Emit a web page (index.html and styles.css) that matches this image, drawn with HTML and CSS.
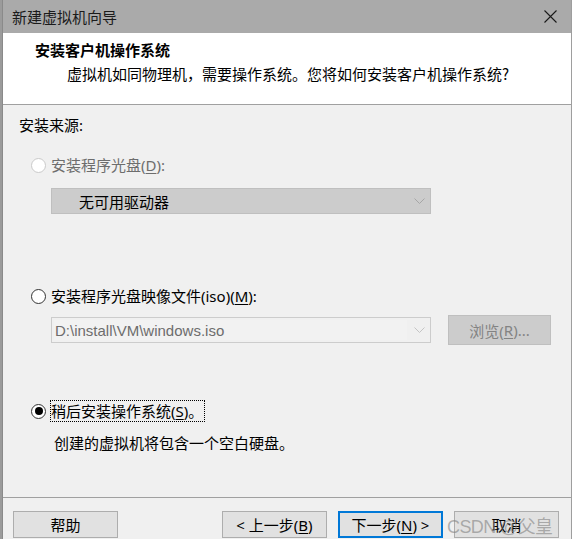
FILE: index.html
```html
<!DOCTYPE html>
<html lang="zh-CN">
<head>
<meta charset="utf-8">
<title>新建虚拟机向导</title>
<link rel="stylesheet" href="styles.css">
</head>
<body>
<div class="window">
  <div class="titlebar">
    <span class="title">新建虚拟机向导</span>
    <svg class="close" width="13" height="13" viewBox="0 0 13 13"><path d="M0.5 0.5 L12.5 12.5 M12.5 0.5 L0.5 12.5" stroke="#1a1a1a" stroke-width="1.1" fill="none"/></svg>
  </div>
  <div class="header">
    <div class="h-title">安装客户机操作系统</div>
    <div class="h-sub">虚拟机如同物理机，需要操作系统。您将如何安装客户机操作系统?</div>
  </div>
  <div class="content">
    <div class="section-label">安装来源:</div>

    <div class="radio-row disabled r1">
      <span class="radio"></span>
      <span class="rlabel">安装程序光盘(<u>D</u>):</span>
    </div>
    <div class="select disabled-select">
      <span class="select-text">无可用驱动器</span>
      <svg class="chev" width="11" height="6" viewBox="0 0 11 6"><path d="M0.5 0.5 L5.5 5.5 L10.5 0.5" stroke="#a6a6a6" fill="none"/></svg>
    </div>

    <div class="radio-row r2">
      <span class="radio"></span>
      <span class="rlabel">安装程序光盘映像文件(iso)(<u>M</u>):</span>
    </div>
    <div class="iso-row">
      <div class="combo">
        <span class="combo-field">D:\install\VM\windows.iso</span>
        <svg class="chev" width="11" height="6" viewBox="0 0 11 6"><path d="M0.5 0.5 L5.5 5.5 L10.5 0.5" stroke="#c4c4c4" fill="none"/></svg>
      </div>
      <div class="btn disabled-btn">浏览(<u>R</u>)...</div>
    </div>

    <div class="radio-row r3">
      <span class="radio checked"></span>
      <span class="rlabel focus">稍后安装操作系统(<u>S</u>)。</span>
    </div>
    <div class="desc">创建的虚拟机将包含一个空白硬盘。</div>
  </div>
  <div class="footer">
    <div class="btn">帮助</div>
    <div class="spacer"></div>
    <div class="btn">&lt; 上一步(<u>B</u>)</div>
    <div class="btn primary">下一步(<u>N</u>) &gt;</div>
    <div class="btn">取消</div>
  </div>
  <div class="watermark">CSDN @父皇</div>
</div>
</body>
</html>
```
FILE: styles.css
```css
* { box-sizing: border-box; }
html, body { margin: 0; padding: 0; }
body {
  width: 572px;
  height: 539px;
  overflow: hidden;
  background: #9b9b9b;
  font-family: "Noto Sans", "Noto Sans CJK SC", sans-serif;
  font-size: 15px;
  color: #000;
}
.window {
  position: relative;
  margin-left: 2px;
  width: 570px;
  height: 539px;
  background: #f0f0f0;
  border-left: 1px solid #8a8a8a;
  border-right: 1px solid #9e9e9e;
  display: flex;
  flex-direction: column;
}
.titlebar {
  height: 33px;
  flex: none;
  background: #aaaaaa;
  display: flex;
  align-items: center;
  justify-content: space-between;
  padding: 0 14px 0 9px;
}
.title {
  font-family: "Noto Sans CJK SC", sans-serif;
  font-size: 15px;
  color: #1b1b1b;
}
.close { display: block; }
.header {
  height: 72px;
  flex: none;
  background: #fff;
  border-bottom: 1px solid #a0a0a0;
  padding: 6px 0 0 32px;
}
.h-title {
  font-family: "Noto Sans CJK SC", sans-serif;
  font-weight: bold;
  font-size: 15px;
  line-height: 22px;
}
.h-sub {
  font-family: "Noto Sans CJK SC", sans-serif;
  line-height: 22px;
  margin-top: 2px;
  padding-left: 32px;
}
.content {
  flex: 1;
  padding: 10px 0 0 16px;
  display: flex;
  flex-direction: column;
}
.section-label { line-height: 20px; }
.radio-row {
  display: flex;
  align-items: center;
  height: 20px;
  padding-left: 12px;
}
.r1 { margin-top: 20px; }
.r2 { margin-top: 72px; }
.r3 { margin-top: 56px; }
.radio {
  width: 15px;
  height: 15px;
  border-radius: 50%;
  border: 1px solid #333;
  background: #fff;
  position: relative;
  margin-right: 5px;
  flex: none;
}
.disabled .radio { border-color: #cacaca; }
.disabled .rlabel { color: #6d6d6d; }
.radio.checked::after {
  content: "";
  position: absolute;
  left: 2.5px;
  top: 2.5px;
  width: 8px;
  height: 8px;
  border-radius: 50%;
  background: #000;
}
.rlabel { line-height: 20px; }
.focus {
  outline: 1px dotted #000;
  outline-offset: 0;
  padding: 0 1px 0 0;
}
.select {
  margin: 13px 0 0 32px;
  width: 380px;
  height: 26px;
  display: flex;
  align-items: center;
  justify-content: space-between;
  padding: 0 5px 0 27px;
}
.disabled-select {
  background: #cccccc;
  border: 1px solid #bfbfbf;
}
.iso-row {
  margin: 9px 0 0 32px;
  display: flex;
  align-items: center;
}
.combo {
  width: 380px;
  height: 26px;
  border: 1px solid #cccccc;
  background: #f0f0f0;
  display: flex;
  align-items: center;
  justify-content: space-between;
  padding: 2px 5px 2px 2px;
}
.combo-field {
  height: 100%;
  width: 353px;
  background: #f2f2f2;
  color: #6d6d6d;
  display: flex;
  align-items: center;
  padding-left: 1px;
  font-family: "Liberation Sans", sans-serif;
}
.btn {
  width: 105px;
  height: 27px;
  border: 1px solid #adadad;
  background: #e1e1e1;
  display: flex;
  align-items: center;
  justify-content: center;
  flex: none;
}
.disabled-btn {
  margin-left: 17px;
  width: 103px;
  height: 30px;
  background: #cccccc;
  border-color: #bfbfbf;
  color: #838383;
}
.desc {
  margin: 12px 0 0 35px;
  line-height: 20px;
}
.footer {
  flex: none;
  height: 42px;
  border-top: 1px solid #a0a0a0;
  display: flex;
  align-items: flex-start;
  padding: 13px 0 0 10px;
  gap: 11px;
}
.spacer { width: 82px; }
.btn.primary {
  border: 2px solid #0078d7;
}
u { text-decoration-thickness: 1px; text-underline-offset: 2px; }
.watermark {
  position: absolute;
  left: 444px;
  top: 512px;
  font-family: "Liberation Sans", "Noto Sans CJK SC", sans-serif;
  font-size: 18px;
  letter-spacing: -0.6px;
  color: rgba(130, 130, 130, 0.6);
  pointer-events: none;
}
```
